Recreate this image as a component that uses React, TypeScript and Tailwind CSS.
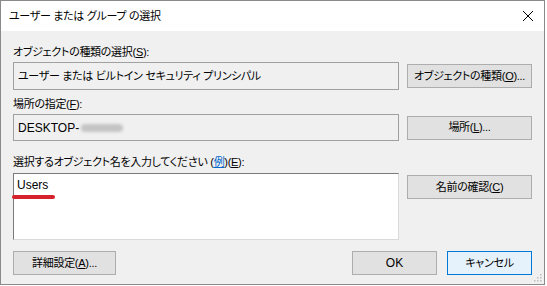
import React from "react";

const font = { fontFamily: '"Liberation Sans", "Noto Sans CJK JP", sans-serif' };

function Btn({ children, className = "" }: { children: React.ReactNode; className?: string }) {
  return (
    <div
      className={
        "flex items-center justify-center h-[24px] border text-[11px] tracking-[-0.3px] text-black whitespace-pre " +
        className
      }
    >
      {children}
    </div>
  );
}

export default function App() {
  return (
    <div className="w-[547px] h-[286px] bg-white [font-feature-settings:'palt']" style={font}>
      <div className="relative w-[545px] h-[285px] border border-[#8a8a8a] bg-[#f0f0f0] flex flex-col">
        {/* Title bar */}
        <div className="h-[30px] bg-white flex items-center justify-between pl-[8px] pr-[9px] shrink-0">
          <span className="text-[11px] tracking-[-0.3px] text-black whitespace-pre">ユーザー または グループ の選択</span>
          <svg width="12" height="12" viewBox="0 0 12 12" className="mr-[1px]">
            <path d="M1 1 L11 11 M11 1 L1 11" stroke="#000" strokeWidth="1" />
          </svg>
        </div>

        {/* Body */}
        <div className="flex flex-col px-[12px] pt-[13px] text-[11px] tracking-[-0.3px] text-black">
          <div className="h-[16px] leading-[16px] whitespace-pre">
            オブジェクトの種類の選択(<span className="underline">S</span>):
          </div>
          <div className="flex items-center gap-[8px] mt-[2px]">
            <div className="w-[386px] h-[28px] border border-[#a0a0a0] bg-[#f0f0f0] flex items-center pl-[4px] whitespace-pre">
              ユーザー または ビルトイン セキュリティ プリンシパル
            </div>
            <Btn className="w-[125px] bg-[#e1e1e1] border-[#adadad]">
              オブジェクトの種類(<span className="underline">O</span>)...
            </Btn>
          </div>

          <div className="h-[16px] leading-[16px] mt-[6px] whitespace-pre">
            場所の指定(<span className="underline">F</span>):
          </div>
          <div className="flex items-center gap-[8px] mt-[2px]">
            <div className="w-[386px] h-[27px] border border-[#a0a0a0] bg-[#f0f0f0] flex items-center pl-[4px]">
              <span className="text-[12px] tracking-normal">DESKTOP-</span>
              <span className="ml-[2px] w-[42px] h-[8px] rounded-full bg-[#c4c4c4] blur-[1.5px]" />
            </div>
            <Btn className="w-[125px] bg-[#e1e1e1] border-[#adadad]">
              場所(<span className="underline">L</span>)...
            </Btn>
          </div>

          <div className="h-[16px] leading-[16px] mt-[13px] whitespace-pre">
            選択するオブジェクト名を入力してください (<span className="text-[#0066cc] underline">例</span>)(<span className="underline">E</span>):
          </div>
          <div className="flex items-start gap-[8px] mt-[3px]">
            <div className="relative w-[386px] h-[67px] border border-t-[#7a7a7a] border-l-[#7a7a7a] border-r-[#d9d9d9] border-b-[#d9d9d9] bg-white pl-[3px] pt-[2px]">
              <span className="text-[12px] tracking-normal">Users</span>
              <div className="absolute left-[-2px] top-[21px] w-[43px] h-[4px] rounded-full bg-[#d6222c]" />
            </div>
            <Btn className="w-[125px] mt-[2px] bg-[#e1e1e1] border-[#adadad]">
              名前の確認(<span className="underline">C</span>)
            </Btn>
          </div>

          <div className="flex items-center mt-[11px]">
            <Btn className="w-[103px] bg-[#e1e1e1] border-[#adadad]">
              詳細設定(<span className="underline">A</span>)...
            </Btn>
            <div className="flex-1" />
            <Btn className="w-[85px] bg-[#e1e1e1] border-[#adadad] text-[12px] tracking-normal">OK</Btn>
            <Btn className="w-[85px] ml-[10px] bg-[#e5f1fb] border-[#0078d7]">キャンセル</Btn>
          </div>
        </div>

        {/* Resize grip */}
        <svg className="absolute right-[2px] bottom-[2px]" width="8" height="8" viewBox="0 0 8 8">
          <rect x="6" y="0" width="1.5" height="1.5" fill="#bdbdbd" />
          <rect x="3" y="3" width="1.5" height="1.5" fill="#bdbdbd" />
          <rect x="6" y="3" width="1.5" height="1.5" fill="#bdbdbd" />
          <rect x="0" y="6" width="1.5" height="1.5" fill="#bdbdbd" />
          <rect x="3" y="6" width="1.5" height="1.5" fill="#bdbdbd" />
          <rect x="6" y="6" width="1.5" height="1.5" fill="#bdbdbd" />
        </svg>
      </div>
    </div>
  );
}
